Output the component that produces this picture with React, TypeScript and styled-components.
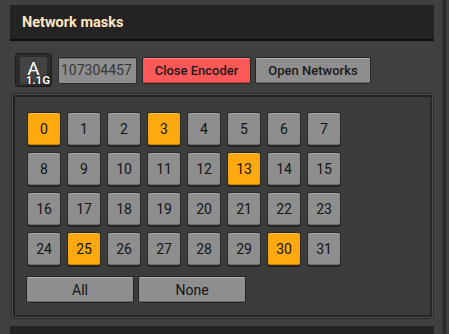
import React from "react";
import styled, { createGlobalStyle } from "styled-components";

const Global = createGlobalStyle`
  html, body { margin: 0; padding: 0; background: #404040; }
  body { font-family: Roboto, "Noto Sans", sans-serif; width: 449px; height: 334px; overflow: hidden; }
`;

const Page = styled.div`
  display: flex;
  width: 449px;
  height: 334px;
  background: #404040;
  overflow: hidden;
`;

const Main = styled.div`
  width: 443px;
  padding-top: 5px;
  display: flex;
  flex-direction: column;
  & > * { flex-shrink: 0; }
`;

const EdgeStrip = styled.div`
  width: 3px;
  background: #2a2a2a;
  box-shadow: -1px 0 0 #353535;
`;

const TitleBar = styled.div<{ $stub?: boolean }>`
  margin-left: 10px;
  width: 424px;
  height: ${(p) => (p.$stub ? "24px" : "36px")};
  box-sizing: border-box;
  background: #242324;
  border-bottom: 2px solid #0e0e0e;
  display: flex;
  align-items: center;
  padding-left: 12px;
  margin-top: ${(p) => (p.$stub ? "9px" : "0")};
`;

const Title = styled.span`
  color: #ffe6c0;
  font-weight: 700;
  font-size: 14.5px;
  padding-top: 1px;
`;

const ToolRow = styled.div`
  display: flex;
  align-items: center;
  margin-top: 12px;
  padding-left: 15px;
  height: 34px;
`;

const SlotButton = styled.div`
  position: relative;
  width: 37px;
  height: 34px;
  box-sizing: border-box;
  background: #2c2c2c;
  border: 1px solid #1c1c1c;
  border-radius: 3px;
  padding: 3px 4px 2px 4px;
  margin-right: 6px;
`;

const SlotFace = styled.div`
  width: 100%;
  height: 100%;
  background: #434343;
  border-radius: 2px;
  display: flex;
  justify-content: center;
  color: #fff;
  font-size: 19px;
  line-height: 23px;
`;

const SlotBadge = styled.span`
  position: absolute;
  right: 1px;
  bottom: 0px;
  color: #fff;
  font-weight: 700;
  font-size: 11.5px;
  line-height: 12px;
  text-shadow: 0 0 2px #000, 0 0 1px #000;
`;

const TextField = styled.div`
  width: 79px;
  height: 27px;
  box-sizing: border-box;
  background: #8e8e8e;
  border: 1px solid #2f2f2f;
  border-top-color: #262626;
  border-radius: 2px;
  box-shadow: inset 0 1px 0 #6e6e6e;
  color: #383838;
  font-size: 14px;
  line-height: 25px;
  padding-left: 2px;
  margin-right: 5px;
`;

const Button = styled.button<{ $w: number; $tone?: "red" | "gray" }>`
  width: ${(p) => p.$w}px;
  height: 27px;
  box-sizing: border-box;
  margin: 0 4px 0 0;
  padding: 0;
  border: 1px solid #252525;
  border-radius: 2px;
  font-family: Roboto, "Noto Sans", sans-serif;
  font-size: 13px;
  font-weight: 500;
  color: #1a1a1a;
  background: ${(p) => (p.$tone === "red" ? "#fe5858" : "#8e8e8e")};
  box-shadow: ${(p) =>
    p.$tone === "red"
      ? "inset 0 1px 0 #ff8080, inset 0 -1px 0 #c84040"
      : "inset 0 1px 0 #b0b0b0, inset 0 -1px 0 #6a6a6a"};
`;

const Frame = styled.div`
  margin: 8px 0 0 13px;
  width: 419px;
  height: 222px;
  box-sizing: border-box;
  background: #3c3c3c;
  border: 2px solid #222;
  border-right-color: #282828;
  border-bottom-color: #282828;
  box-shadow: 0 0 0 1px #4a4a4a, 0 0 0 2px #2d2d2d;
  padding: 15px 0 0 12px;
  display: flex;
  flex-direction: column;
  gap: 10px;
`;

const Grid = styled.div`
  display: grid;
  grid-template-columns: repeat(8, 34px);
  grid-auto-rows: 34px;
  gap: 6px;
`;

const MaskButton = styled.button<{ $on: boolean }>`
  margin: 0;
  padding: 0;
  box-sizing: border-box;
  border: 1px solid #2a2a2a;
  border-radius: 3px;
  font-family: Roboto, "Noto Sans", sans-serif;
  font-size: 14px;
  font-weight: 400;
  color: #141414;
  background: ${(p) => (p.$on ? "#ffa90e" : "#8e8e8e")};
  box-shadow: ${(p) =>
    p.$on
      ? "inset 0 1px 0 #ffc447, inset 0 -1px 0 #c98300, 0 1px 0 #1e1e1e"
      : "inset 0 1px 0 #ababab, inset 0 -1px 0 #6c6c6c, 0 1px 0 #1e1e1e"};
`;

const BottomRow = styled.div`
  display: flex;
  gap: 4px;
  margin-left: -1px;
`;

const WideButton = styled.button`
  width: 108px;
  height: 27px;
  margin: 0;
  padding: 0;
  box-sizing: border-box;
  border: 1px solid #252525;
  border-radius: 2px;
  font-family: Roboto, "Noto Sans", sans-serif;
  font-size: 14px;
  font-weight: 400;
  color: #141414;
  background: #8e8e8e;
  box-shadow: inset 0 1px 0 #b0b0b0, inset 0 -1px 0 #6a6a6a;
`;

const selected = new Set([0, 3, 13, 25, 30]);

export default function App() {
  return (
    <>
      <Global />
      <Page>
        <Main>
          <TitleBar>
            <Title>Network masks</Title>
          </TitleBar>
          <ToolRow>
            <SlotButton>
              <SlotFace>A</SlotFace>
              <SlotBadge>1.1G</SlotBadge>
            </SlotButton>
            <TextField>107304457</TextField>
            <Button $w={109} $tone="red">Close Encoder</Button>
            <Button $w={116}>Open Networks</Button>
          </ToolRow>
          <Frame>
            <Grid>
              {Array.from({ length: 32 }, (_, i) => (
                <MaskButton key={i} $on={selected.has(i)}>
                  {i}
                </MaskButton>
              ))}
            </Grid>
            <BottomRow>
              <WideButton>All</WideButton>
              <WideButton>None</WideButton>
            </BottomRow>
          </Frame>
          <TitleBar $stub />
        </Main>
        <EdgeStrip />
      </Page>
    </>
  );
}
